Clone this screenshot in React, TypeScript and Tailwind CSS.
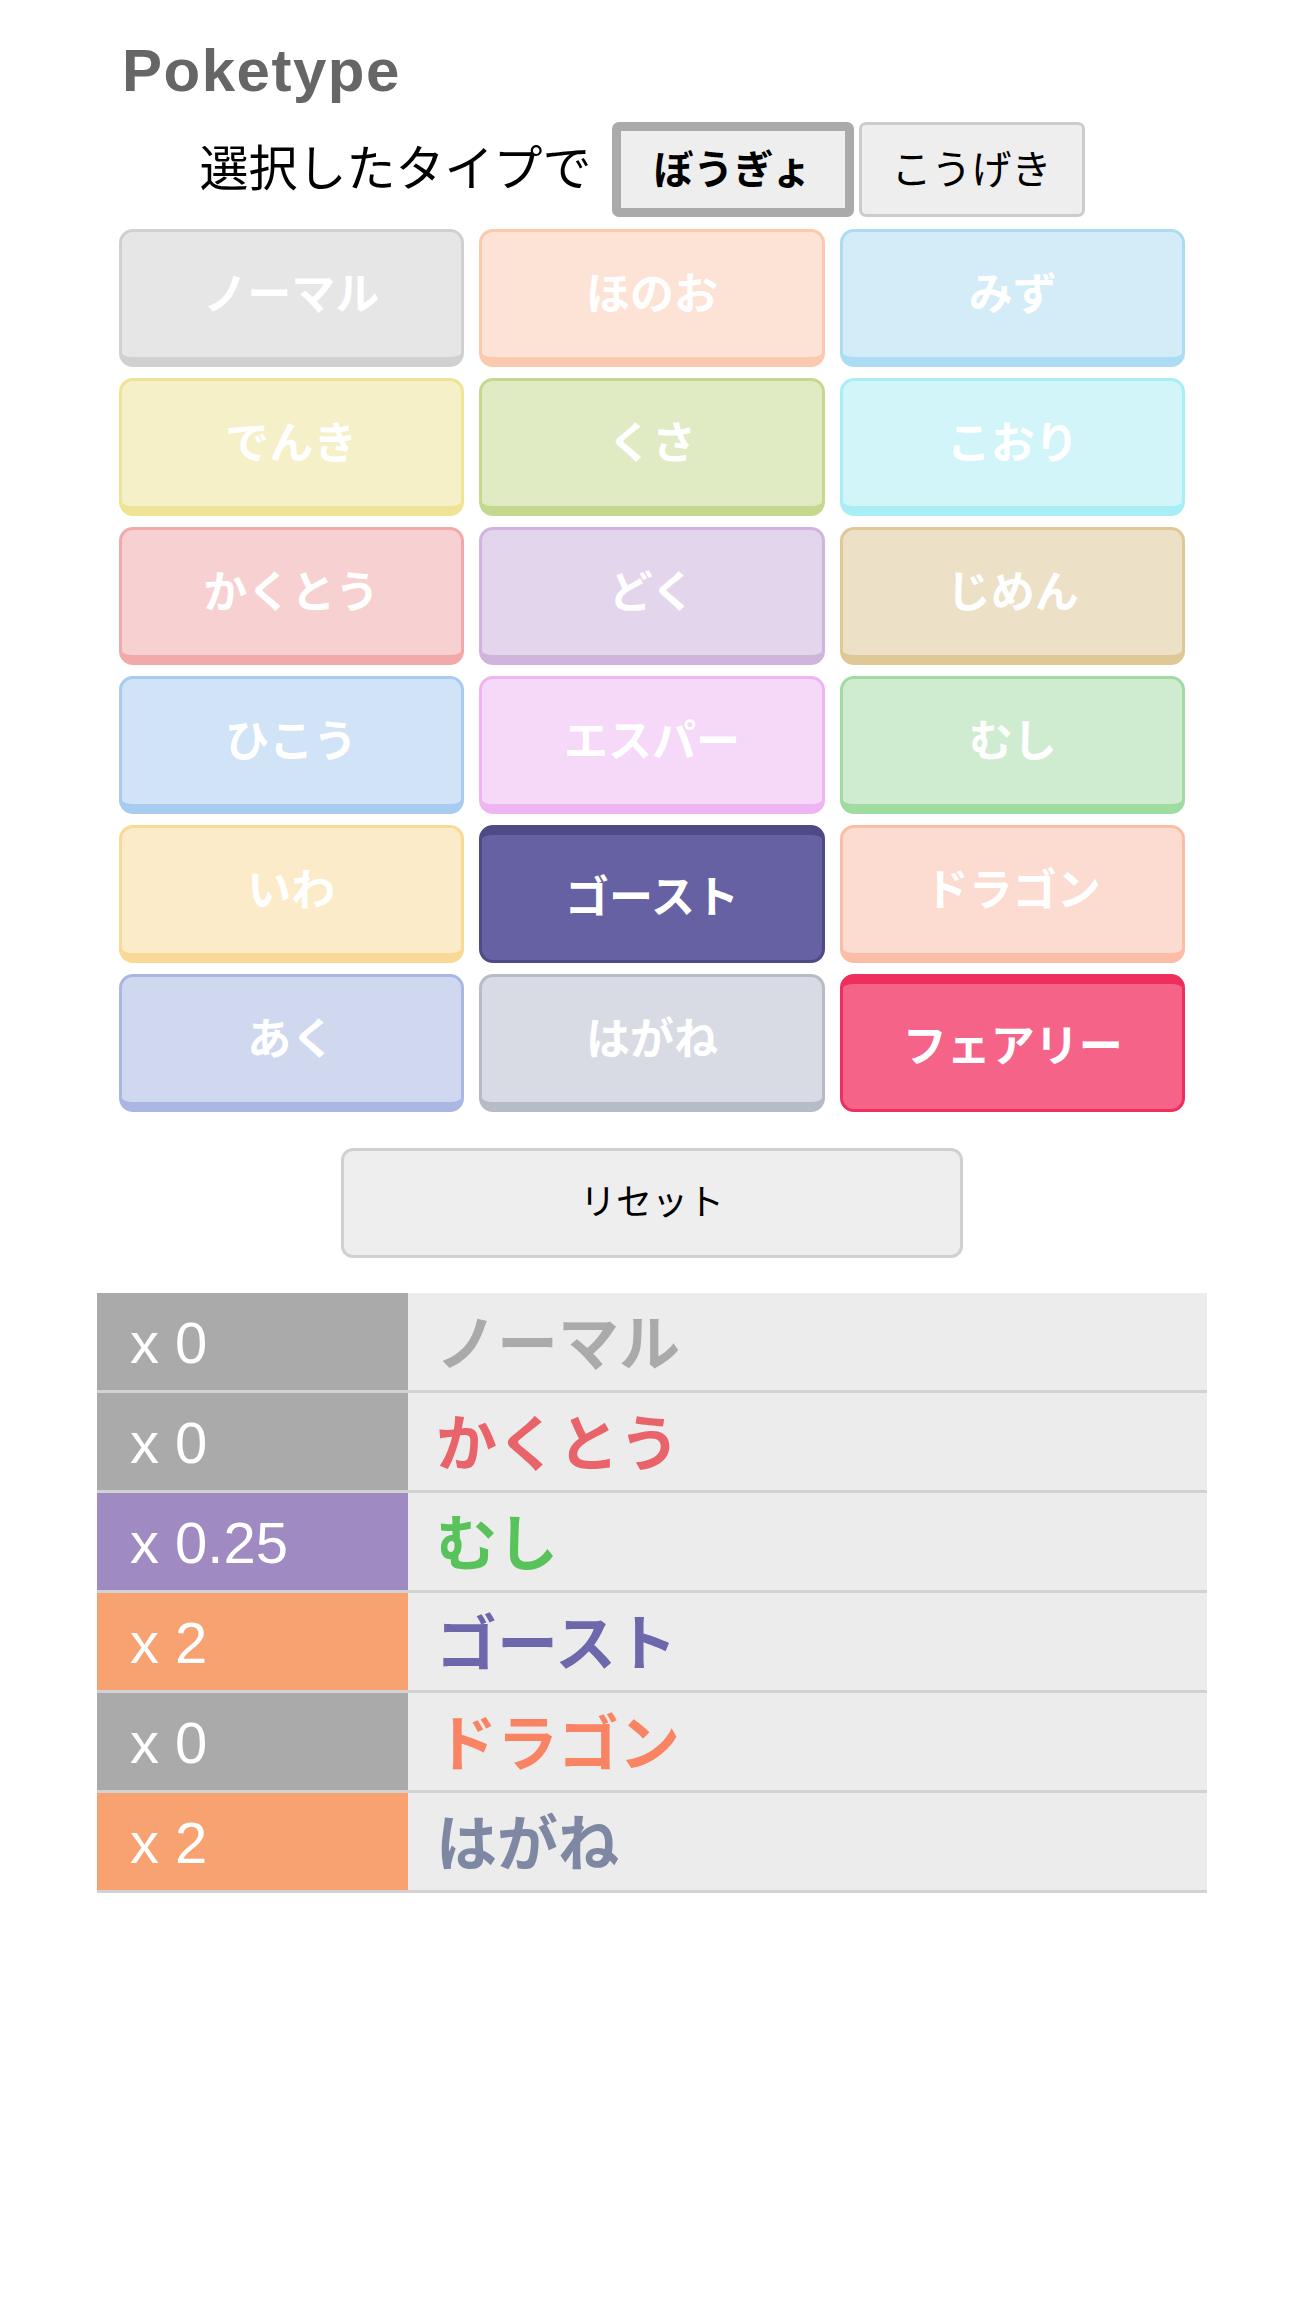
import React from "react";

type TypeCard = { name: string; cls: string; selected?: boolean };

const jp = { fontFamily: '"Liberation Sans", "Noto Sans CJK JP", sans-serif' };

const typeCards: TypeCard[] = [
  { name: "ノーマル", cls: "bg-[#e6e6e6] border-[#d0d0d0]" },
  { name: "ほのお", cls: "bg-[#fde3d6] border-[#fbc9ad]" },
  { name: "みず", cls: "bg-[#d3ecf8] border-[#abdcf3]" },
  { name: "でんき", cls: "bg-[#f5f0c8] border-[#efe496]" },
  { name: "くさ", cls: "bg-[#e0ebc4] border-[#c4d98e]" },
  { name: "こおり", cls: "bg-[#d2f5f9] border-[#a9eef5]" },
  { name: "かくとう", cls: "bg-[#f7d1d1] border-[#f2a9a9]" },
  { name: "どく", cls: "bg-[#e3d5ec] border-[#d0b4dc]" },
  { name: "じめん", cls: "bg-[#ece1c7] border-[#dec896]" },
  { name: "ひこう", cls: "bg-[#d1e3f7] border-[#a8cbf0]" },
  { name: "エスパー", cls: "bg-[#f6d8f8] border-[#efb5f3]" },
  { name: "むし", cls: "bg-[#cfecd0] border-[#a0dca2]" },
  { name: "いわ", cls: "bg-[#fcebc8] border-[#f9d996]" },
  { name: "ゴースト", cls: "bg-[#6561a3] border-[#4e4a86]", selected: true },
  { name: "ドラゴン", cls: "bg-[#fcdbd0] border-[#fbbda5]" },
  { name: "あく", cls: "bg-[#d0d8f0] border-[#a9b7e2]" },
  { name: "はがね", cls: "bg-[#d8dbe3] border-[#b6bbc8]" },
  { name: "フェアリー", cls: "bg-[#f66388] border-[#ee2e5c]", selected: true },
];

const results = [
  { rate: "x 0", rateCls: "bg-[#aaaaaa]", name: "ノーマル", nameCls: "text-[#aaaaaa]" },
  { rate: "x 0", rateCls: "bg-[#aaaaaa]", name: "かくとう", nameCls: "text-[#e9646a]" },
  { rate: "x 0.25", rateCls: "bg-[#9f8ac1]", name: "むし", nameCls: "text-[#58c35b]" },
  { rate: "x 2", rateCls: "bg-[#f8a271]", name: "ゴースト", nameCls: "text-[#6c68ab]" },
  { rate: "x 0", rateCls: "bg-[#aaaaaa]", name: "ドラゴン", nameCls: "text-[#f98463]" },
  { rate: "x 2", rateCls: "bg-[#f8a271]", name: "はがね", nameCls: "text-[#7f88a3]" },
];

function App() {
  return (
    <div className="min-h-[2311px] bg-white" style={jp}>
      <div className="ml-[97px] w-[1110px] pt-[41px]">
        <h1 className="ml-[25px] text-[60px] leading-none font-bold tracking-[1.5px] text-[#666666]">
          Poketype
        </h1>

        {/* mode switch */}
        <div className="mt-[21px] flex items-center justify-center pr-[20px]">
          <span className="mr-[20px] text-[49px] leading-none text-black">選択したタイプで</span>
          <button className="h-[95px] rounded-[7px] border-[9px] border-[#aaaaaa] bg-[#eeeeee] px-[33px] text-[40px] leading-none font-bold text-black">
            ぼうぎょ
          </button>
          <button className="ml-[5px] h-[95px] rounded-[7px] border-[3px] border-[#cccccc] bg-[#eeeeee] px-[30px] text-[40px] leading-none text-black">
            こうげき
          </button>
        </div>

        <div className="mx-auto mt-[12px] grid w-[1067px] grid-cols-3 gap-x-[15px] gap-y-[11px]">
          {typeCards.map((t) => (
            <button
              key={t.name}
              className={
                "flex h-[138px] items-center justify-center rounded-[14px] border-x-[3px] text-[44px] leading-none font-bold text-white " +
                t.cls +
                (t.selected ? " border-t-[10px] border-b-[3px]" : " border-t-[3px] border-b-[10px]")
              }
            >
              {t.name}
            </button>
          ))}
        </div>

        <div className="mt-[36px] flex justify-center">
          <button className="h-[110px] w-[622px] rounded-[12px] border-[3px] border-[#d0d0d0] bg-[#eeeeee] text-[36px] leading-none text-black">
            リセット
          </button>
        </div>

        <div className="mt-[35px]">
          {results.map((r, i) => (
            <div key={i} className="flex h-[100px] border-b-[3px] border-[#d2d2d2]">
              <div className={"flex w-[311px] items-center pl-[33px] pt-[3px] text-[58px] leading-none text-white " + r.rateCls}>
                {r.rate}
              </div>
              <div className={"flex flex-1 items-center bg-[#ececec] pl-[28px] pt-[8px] text-[61px] leading-none font-bold " + r.nameCls}>
                {r.name}
              </div>
            </div>
          ))}
        </div>
      </div>
    </div>
  );
}

export default App;
